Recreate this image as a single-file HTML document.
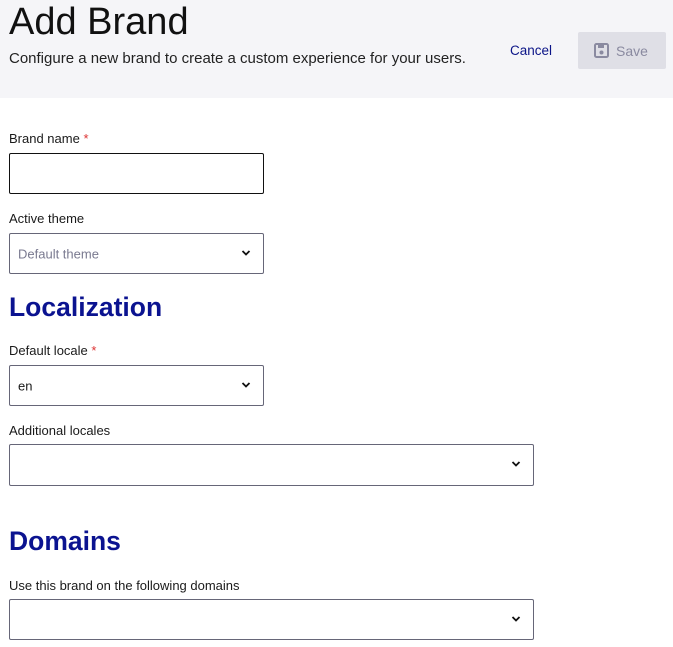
<!DOCTYPE html>
<html><head><style>
body{margin:0;width:673px;height:647px;background:#fff;font-family:"Liberation Sans",sans-serif;color:#1a1a1a;position:relative;overflow:hidden}
.hdr{position:absolute;left:0;top:0;width:673px;height:98px;background:#f5f5f8}
.abs{position:absolute}
h1{position:absolute;left:9px;top:1px;margin:0;font-weight:400;font-size:38px;color:#111}
.sub{left:9px;top:50px;font-size:15px;color:#222}
.cancel{left:510px;top:43px;font-size:13.5px;color:#0b1487}
.save{left:578px;top:32px;width:88px;height:37px;background:#dfdfe6;border-radius:2px;color:#8a8aa0;font-size:14px}
.lbl{font-size:13px;color:#1a1a1a;left:9px}
.req{color:#d33}
.box{position:absolute;left:9px;box-sizing:border-box;border:1px solid #666678;border-radius:2px;background:#fff}
.chev{position:absolute;right:12px;top:50%;margin-top:-5px}
h2{position:absolute;left:9px;margin:0;font-size:26.5px;font-weight:700;color:#0b1390}
.val{position:absolute;left:8px;top:50%;transform:translateY(-50%);font-size:13px}
</style></head><body>
<div class="hdr"></div>
<h1>Add Brand</h1>
<div class="abs sub">Configure a new brand to create a custom experience for your users.</div>
<div class="abs cancel">Cancel</div>
<div class="abs save"><svg class="abs" style="left:16px;top:11px" width="15" height="15" viewBox="0 0 15 15"><rect x="1" y="1" width="13" height="13" rx="1.5" fill="none" stroke="#8a8aa0" stroke-width="2"/><rect x="4" y="2" width="6" height="3" fill="#8a8aa0"/><circle cx="7.5" cy="9.5" r="2" fill="#8a8aa0"/></svg><span class="abs" style="left:38px;top:11px">Save</span></div>

<div class="abs lbl" style="top:131px">Brand name <span class="req">*</span></div>
<div class="box" style="top:153px;width:255px;height:41px;border:1.5px solid #111"></div>

<div class="abs lbl" style="top:211px">Active theme</div>
<div class="box" style="top:233px;width:255px;height:41px"><span class="val" style="color:#7a7a90">Default theme</span><svg class="chev" width="10" height="8" viewBox="0 0 10 8"><path d="M1.5 2 5 5.5 8.5 2" fill="none" stroke="#111" stroke-width="1.8"/></svg></div>

<h2 style="top:292px">Localization</h2>

<div class="abs lbl" style="top:343px">Default locale <span class="req">*</span></div>
<div class="box" style="top:365px;width:255px;height:41px"><span class="val">en</span><svg class="chev" width="10" height="8" viewBox="0 0 10 8"><path d="M1.5 2 5 5.5 8.5 2" fill="none" stroke="#111" stroke-width="1.8"/></svg></div>

<div class="abs lbl" style="top:423px">Additional locales</div>
<div class="box" style="top:444px;width:525px;height:42px"><svg class="chev" width="10" height="8" viewBox="0 0 10 8"><path d="M1.5 2 5 5.5 8.5 2" fill="none" stroke="#111" stroke-width="1.8"/></svg></div>

<h2 style="top:526px">Domains</h2>

<div class="abs lbl" style="top:578px">Use this brand on the following domains</div>
<div class="box" style="top:599px;width:525px;height:41px"><svg class="chev" width="10" height="8" viewBox="0 0 10 8"><path d="M1.5 2 5 5.5 8.5 2" fill="none" stroke="#111" stroke-width="1.8"/></svg></div>
</body></html>
